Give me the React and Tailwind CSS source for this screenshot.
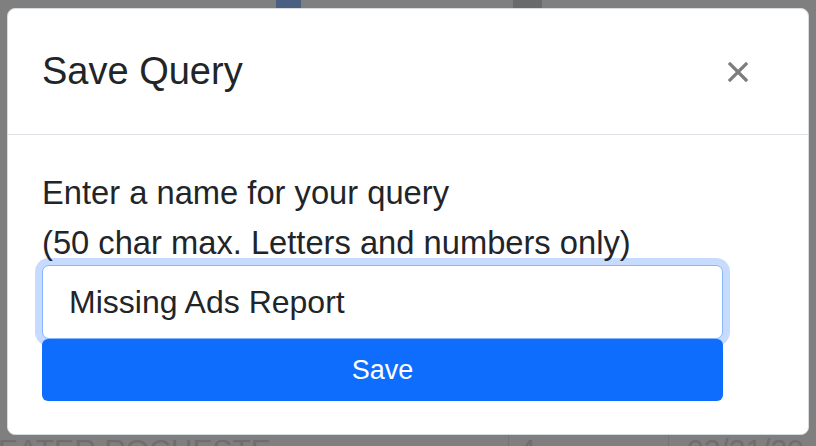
import { useState } from 'react';

const font = { fontFamily: '"Liberation Sans", Arial, Helvetica, sans-serif' };

function CloseIcon() {
  return (
    <svg width="20" height="20" viewBox="0 0 20 20" className="block">
      <path d="M2 2 L18 18 M18 2 L2 18" stroke="#7d7d7d" strokeWidth="3.2" strokeLinecap="square" />
    </svg>
  );
}

export default function App() {
  const [name, setName] = useState('Missing Ads Report');

  return (
    <div className="relative w-[816px] h-[446px] overflow-hidden bg-[#7f7f7f]" style={font}>
      {/* dimmed page behind the backdrop */}
      <div className="absolute left-[276px] top-0 w-[25px] h-[8px] bg-[#4b6080]" />
      <div className="absolute left-[513px] top-0 w-[29px] h-[8px] bg-[#6a6a6a]" />
      <div className="absolute left-[-2px] top-[430px] flex items-start text-[30px] leading-[40px] text-[#6e6e6e] uppercase">
        <span className="w-[510px] whitespace-nowrap">eater rocheste</span>
        <span className="w-[160px] border-l border-[#747474] pl-[10px]">4</span>
        <span className="border-l border-[#747474] pl-[18px] whitespace-nowrap">02/21/20</span>
      </div>

      {/* modal */}
      <div className="relative ml-[7px] mt-[8px] w-[802px] h-[427px] bg-white rounded-[8px] border-[1.5px] border-[#d6dbe0]">
        <div className="h-[126px] flex items-center justify-between pl-[34px] pr-[60px] border-b-[1.5px] border-[#dee2e6]">
          <h5 className="text-[38px] text-[#212529]">Save Query</h5>
          <button type="button" aria-label="Close" className="p-0">
            <CloseIcon />
          </button>
        </div>

        <div className="pl-[34px] pt-[33px]">
          <p className="text-[32.7px] leading-[50px] text-[#212529]">
            Enter a name for your query
            <br />
            (50 char max. Letters and numbers only)
          </p>
          <input
            type="text"
            value={name}
            onChange={(e) => setName(e.target.value)}
            className="block -mt-[3px] w-[681px] h-[74px] pl-[26px] text-[32px] text-[#212529] bg-white border-[1.5px] border-[#86b7fe] rounded-[7px] outline-none shadow-[0_0_0_7px_#c6dbfd]"
            style={font}
          />
          <button
            type="button"
            className="relative block w-[681px] h-[62px] bg-[#0f6dfd] text-white text-[27px] rounded-[6px]"
            style={font}
          >
            Save
          </button>
        </div>
      </div>
    </div>
  );
}
